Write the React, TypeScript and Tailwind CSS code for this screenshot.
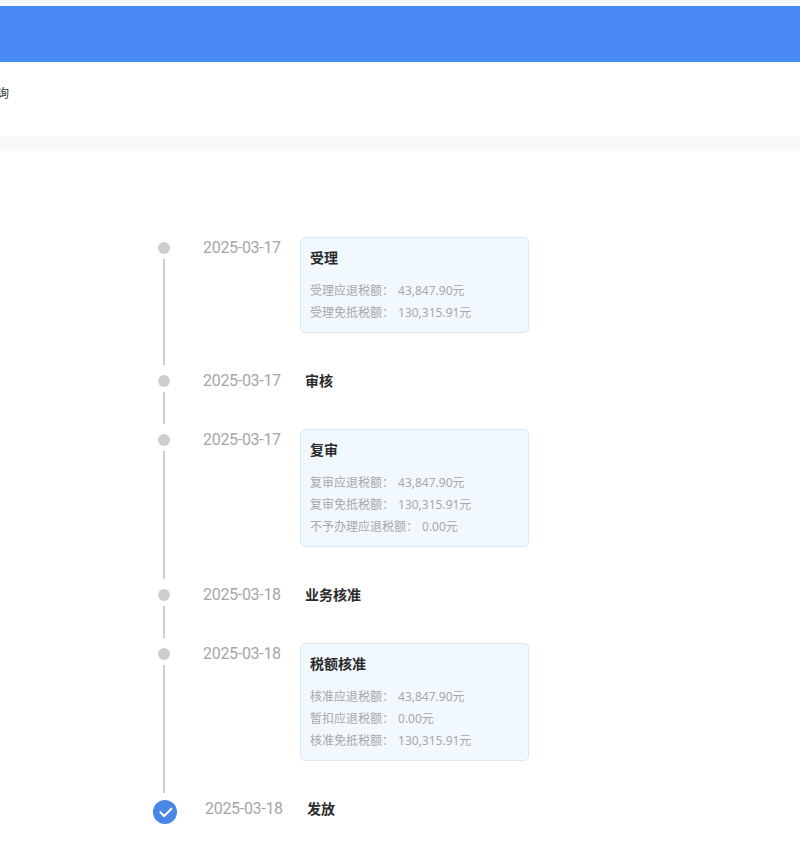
const font = "font-['Noto_Sans','Noto_Sans_CJK_SC',sans-serif]"

type Step = {
  date: string
  title: string
  rows?: [string, string][]
  done?: boolean
}

const steps: Step[] = [
  {
    date: '2025-03-17',
    title: '受理',
    rows: [
      ['受理应退税额：', '43,847.90元'],
      ['受理免抵税额：', '130,315.91元'],
    ],
  },
  { date: '2025-03-17', title: '审核' },
  {
    date: '2025-03-17',
    title: '复审',
    rows: [
      ['复审应退税额：', '43,847.90元'],
      ['复审免抵税额：', '130,315.91元'],
      ['不予办理应退税额：', '0.00元'],
    ],
  },
  { date: '2025-03-18', title: '业务核准' },
  {
    date: '2025-03-18',
    title: '税额核准',
    rows: [
      ['核准应退税额：', '43,847.90元'],
      ['暂扣应退税额：', '0.00元'],
      ['核准免抵税额：', '130,315.91元'],
    ],
  },
  { date: '2025-03-18', title: '发放', done: true },
]

const CheckDot = () => (
  <svg width="24" height="24" viewBox="0 0 24 24" className="mt-[2px] block">
    <circle cx="12" cy="12" r="12" fill="#4a86e4" />
    <path d="M6.8 11.8 L11.2 16 L19 8.2" fill="none" stroke="#fff" strokeWidth="2" />
  </svg>
)

const TimelineRow = ({ step }: { step: Step }) => {
  const { date, title, rows, done } = step
  return (
    <div className={done ? 'flex pl-[153px]' : 'flex pl-[152px]'}>
      <div className="flex w-6 flex-col items-center">
        {done ? (
          <CheckDot />
        ) : (
          <>
            <div className="mt-[5px] h-3 w-3 shrink-0 rounded-full bg-[#cecece]" />
            <div className="mt-[5px] mb-[5px] w-[2px] flex-1 bg-[#cecece]" />
          </>
        )}
      </div>
      <div className={`${done ? 'ml-[28px]' : 'ml-[27px]'} w-[78px] font-['Roboto',sans-serif] text-[16px] leading-[21px] tracking-[-0.3px] whitespace-nowrap text-[#a6a6a6]`}>
        {date}
      </div>
      <div className="ml-[19px] w-[229px]">
        {rows ? (
          <div className="mb-[37px] rounded-[5px] border border-[#dbe9f3] bg-[#f1f8fe] px-[9px] pt-[9px] pb-[8px]">
            <div className="mb-[11px] text-sm leading-[22px] font-bold text-[#2b2b2b]">{title}</div>
            {rows.map(([label, value]) => (
              <div key={label} className="flex text-xs leading-[22px] text-[#a8a8a8]">
                <span>{label}</span>
                <span className="ml-1">{value}</span>
              </div>
            ))}
          </div>
        ) : (
          <div className={`pl-[5px] text-sm leading-[22px] font-bold text-[#2b2b2b] ${done ? 'pb-[26px]' : 'pb-[37px]'}`}>
            {title}
          </div>
        )}
      </div>
    </div>
  )
}

const App = () => {
  return (
    <div className={`h-[846px] w-full overflow-hidden bg-white ${font}`}>
      <div className="h-[6px] bg-[#f7f8fa]" />
      <div className="h-14 bg-[#4a8af4]" />
      <div className="flex h-[74px] items-start pt-[23px]">
        <span className="-ml-[3px] text-xs leading-[18px] text-[#333]">询</span>
      </div>
      <div className="h-[15px] bg-[#f9f9f9]" />
      <div className="pt-[86px]">
        {steps.map((step) => (
          <TimelineRow key={step.title} step={step} />
        ))}
      </div>
    </div>
  )
}

export default App
